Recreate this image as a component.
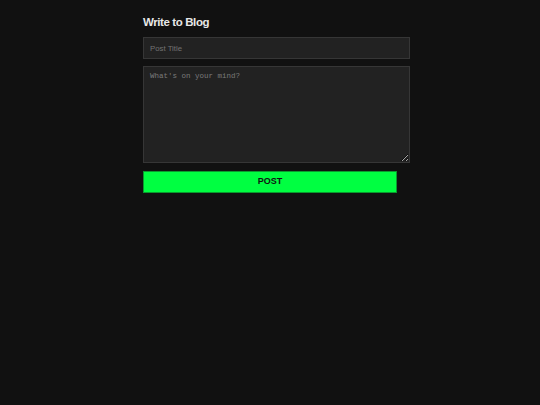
import React from "react";

export default function App() {
  return (
    <div className="min-h-[405px] w-full bg-[#111111]" style={{ fontFamily: '"Liberation Sans", Arial, sans-serif' }}>
      <div className="mx-auto w-[254px] pt-[15px]">
        <h1 className="text-[11.5px] leading-[14px] font-bold text-[#e8e8e8] tracking-[-0.4px]">Write to Blog</h1>
        <input
          type="text"
          placeholder="Post Title"
          className="mt-[8px] block h-[22px] w-[267px] border border-[#363636] bg-[#222222] px-[6px] text-[7.8px] text-[#ddd] placeholder:text-[#727272] outline-none"
        />
        <textarea
          placeholder="What's on your mind?"
          className="mt-[7px] block h-[97px] w-[267px] border border-[#363636] bg-[#222222] px-[6px] pt-[4px] text-[7.5px] leading-[10px] text-[#ddd] placeholder:text-[#7a7a7a] outline-none [color-scheme:dark]"
          style={{ fontFamily: '"Liberation Mono", "Courier New", monospace' }}
        />
        <button className="mt-[8px] block h-[22px] w-[254px] border border-[#0a9a2e] bg-[#00ff41] text-[9px] font-bold text-[#111]">
          POST
        </button>
      </div>
    </div>
  );
}
